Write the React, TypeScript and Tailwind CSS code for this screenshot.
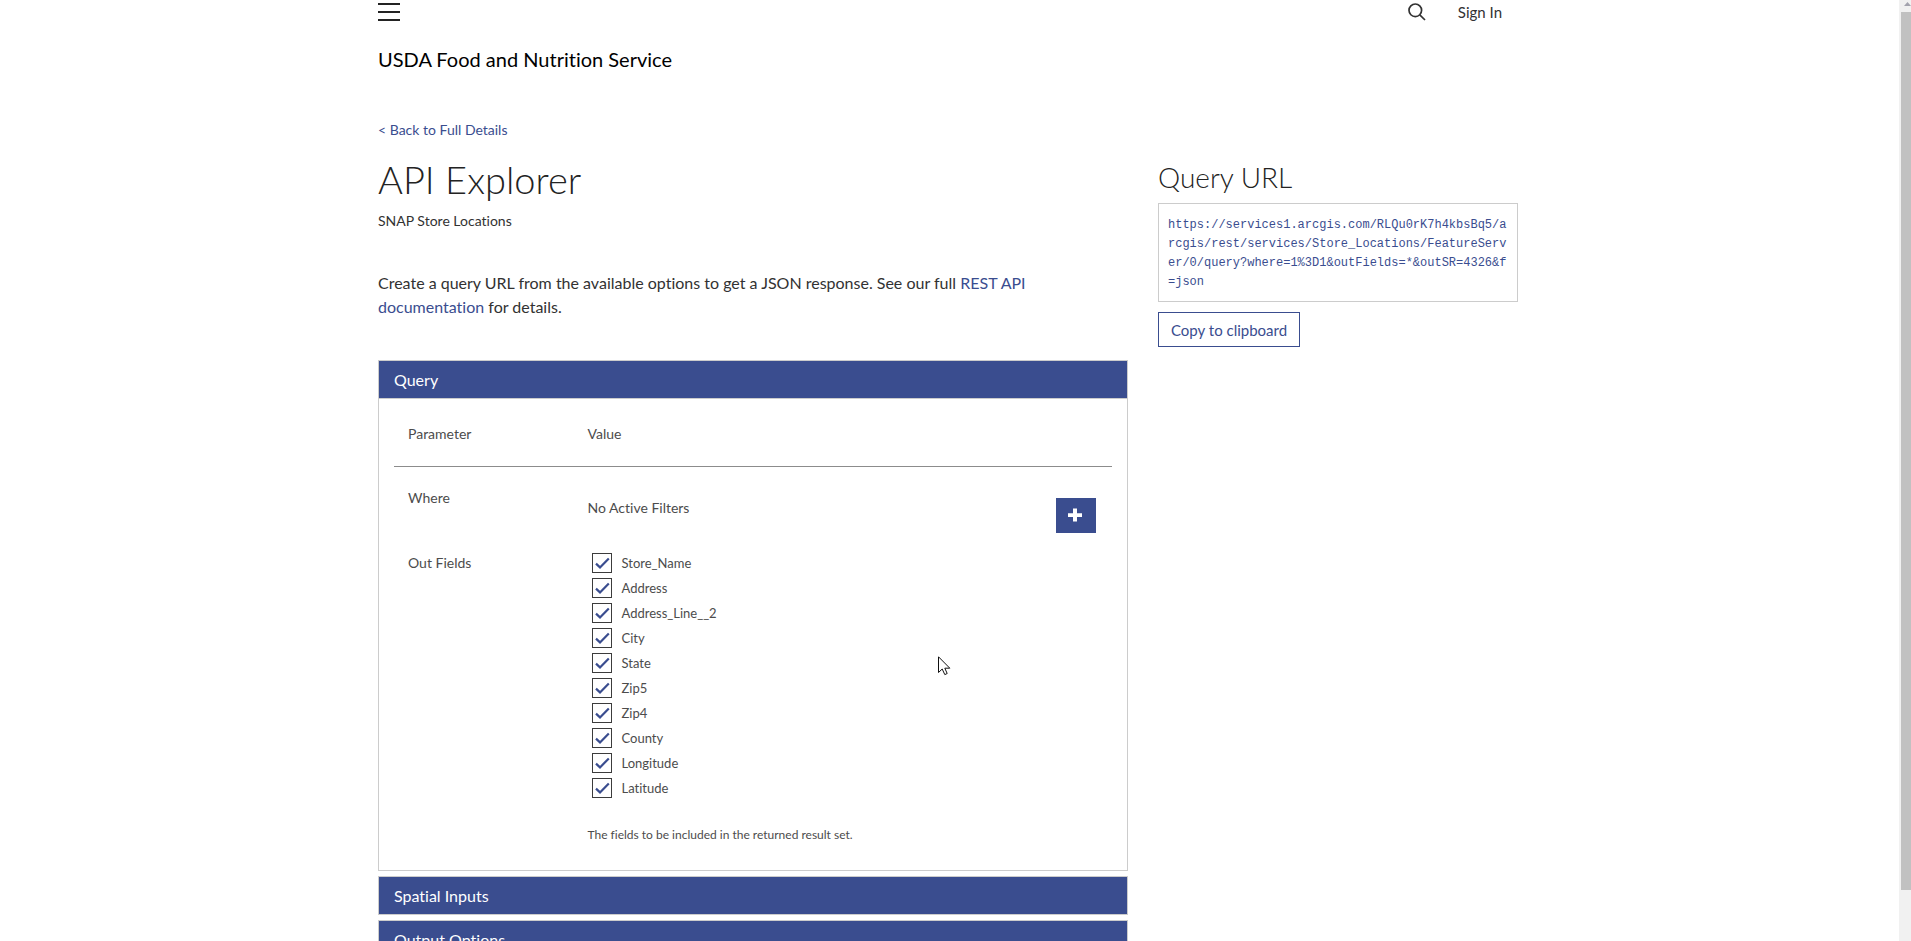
import React, { useState } from "react";

const FIELDS = [
  "Store_Name",
  "Address",
  "Address_Line__2",
  "City",
  "State",
  "Zip5",
  "Zip4",
  "County",
  "Longitude",
  "Latitude",
];

const QUERY_URL =
  "https://services1.arcgis.com/RLQu0rK7h4kbsBq5/arcgis/rest/services/Store_Locations/FeatureServer/0/query?where=1%3D1&outFields=*&outSR=4326&f=json";

function TopBar() {
  return (
    <header>
      <div className="flex h-6 items-center justify-between">
        <button type="button" aria-label="Menu" className="text-[#232323]">
          <svg width="22" height="20" viewBox="0 0 22 20" fill="currentColor">
            <rect y="1" width="22" height="2" />
            <rect y="9" width="22" height="2" />
            <rect y="17" width="22" height="2" />
          </svg>
        </button>
        <div className="flex items-center gap-8 pr-4">
          <button type="button" aria-label="Search" className="text-[#323232]">
            <svg width="18" height="18" viewBox="0 0 18 18" fill="none" stroke="currentColor" strokeWidth="1.7">
              <circle cx="7.3" cy="7.3" r="6.3" />
              <path d="M11.8 11.8 L17 17" />
            </svg>
          </button>
          <a href="#signin" className="text-[15px] leading-5 text-[#323232]">
            Sign In
          </a>
        </div>
      </div>
      <div className="mt-[21px] text-xl leading-7 text-black">USDA Food and Nutrition Service</div>
    </header>
  );
}

function FieldCheckbox({ name }: { name: string }) {
  const [checked, setChecked] = useState(true);
  const id = "field-" + name;
  return (
    <li className="flex h-5 items-center gap-[10px]">
      <span className="grid size-5">
        <input
          id={id}
          type="checkbox"
          checked={checked}
          onChange={(e) => setChecked(e.target.checked)}
          className="col-start-1 row-start-1 size-5 appearance-none border border-[#3c3c3c] bg-white"
        />
        {checked && (
          <svg
            className="pointer-events-none col-start-1 row-start-1"
            width="20"
            height="20"
            viewBox="0 0 20 20"
            fill="none"
            stroke="#3a4d8f"
            strokeWidth="2.2"
          >
            <path d="M4 10.6 L8 14.4 L16.8 5.4" />
          </svg>
        )}
      </span>
      <label htmlFor={id} className="text-[13px] leading-5">
        {name}
      </label>
    </li>
  );
}

function SectionHeader({ title, open }: { title: string; open?: boolean }) {
  return (
    <h2>
      <button
        type="button"
        aria-expanded={!!open}
        className="block w-full bg-[#3a4d8f] px-[15px] pt-[7px] pb-[6px] text-left text-base leading-6 text-white"
      >
        {title}
      </button>
    </h2>
  );
}

function QueryTable() {
  return (
    <div className="border-t border-[#ccc] px-[15px]">
      <table className="w-full table-fixed text-sm leading-5 text-[#4c4c4c]">
        <thead>
          <tr className="border-b border-[#8c8c8c] text-left">
            <th className="w-1/4 px-[14px] pt-[25px] pb-[22px] font-normal">Parameter</th>
            <th className="px-[14px] pt-[25px] pb-[22px] font-normal">Value</th>
          </tr>
        </thead>
        <tbody>
          <tr className="align-top">
            <th className="px-[14px] pt-[21px] text-left font-normal">Where</th>
            <td className="pt-[31px] pr-4 pl-[14px]">
              <div className="flex items-start justify-between">
                <span>No Active Filters</span>
                <button
                  type="button"
                  aria-label="Add filter"
                  className="flex h-[35px] w-10 items-center justify-center bg-[#3a4d8f] pr-[2px] pb-[2px]"
                >
                  <svg width="14" height="14" viewBox="0 0 14 14" fill="#fff">
                    <path d="M5 0.5h4v4.8h5v3.6h-5v4.6h-4v-4.6h-5v-3.6h5z" />
                  </svg>
                </button>
              </div>
            </td>
          </tr>
          <tr className="align-top">
            <th className="px-[14px] pt-5 text-left font-normal">Out Fields</th>
            <td className="px-[14px] pt-5 pb-[25px]">
              <ul className="flex flex-col gap-[5px] pl-1">
                {FIELDS.map((f) => (
                  <FieldCheckbox key={f} name={f} />
                ))}
              </ul>
              <p className="mt-[27px] text-xs leading-5">
                The fields to be included in the returned result set.
              </p>
            </td>
          </tr>
        </tbody>
      </table>
    </div>
  );
}

function Scrollbar() {
  return (
    <div aria-hidden="true" className="flex h-full w-3 shrink-0 flex-col bg-[#f1f1f1] pl-[2px]">
      <div className="flex h-3 shrink-0 justify-end pt-[2px]">
        <svg width="7" height="4" viewBox="0 0 7 4" fill="#a3a3ae">
          <path d="M0 4 L3.5 0 L7 4 Z" />
        </svg>
      </div>
      <div className="h-[93.3%] bg-[#c1c1c1]" />
    </div>
  );
}

export default function App() {
  return (
    <div className="flex h-screen overflow-hidden bg-white font-['Lato',sans-serif] text-[#323232] [font-variant-ligatures:none]">
      <div className="min-w-0 flex-1 overflow-y-auto pr-[3px] [scrollbar-width:none]">
        <div className="mx-auto max-w-[1140px]">
          <TopBar />
          <main className="pt-[47px] pb-10">
            <a href="#details" className="block w-fit text-sm leading-5 text-[#3a4d8f]">
              &lt; Back to Full Details
            </a>
            <div className="grid grid-cols-[minmax(0,25fr)_minmax(0,12fr)] gap-[30px]">
              <div className="pt-[17px]">
                <h1 className="text-[38px] leading-[44px] font-light text-[#232323]">API Explorer</h1>
                <p className="mt-[10px] text-sm leading-5">SNAP Store Locations</p>
                <p className="mt-10 text-base leading-6">
                  Create a query URL from the available options to get a JSON response. See our full{" "}
                  <a href="#rest" className="text-[#3a4d8f]">
                    REST API
                    <br />
                    documentation
                  </a>{" "}
                  for details.
                </p>
                <div className="mt-[41px] flex flex-col gap-[5px]">
                  <section className="border border-[#ccc]">
                    <SectionHeader title="Query" open />
                    <QueryTable />
                  </section>
                  <section className="border border-[#ccc]">
                    <SectionHeader title="Spatial Inputs" />
                  </section>
                  <section className="border border-[#ccc]">
                    <SectionHeader title="Output Options" />
                  </section>
                </div>
              </div>
              <aside className="pt-[21px]">
                <h2 className="text-[28px] leading-8 font-light text-[#232323]">Query URL</h2>
                <div className="mt-[10px] border border-[#ccc] px-[9px] pt-3 pb-[9px] font-['Liberation_Mono',monospace] text-xs leading-[19px] break-all text-[#3a4d8f]">
                  {QUERY_URL}
                </div>
                <button
                  type="button"
                  className="mt-[10px] h-[35px] border border-[#3a4d8f] bg-white px-3 text-[15px] leading-5 text-[#3a4d8f]"
                >
                  Copy to clipboard
                </button>
              </aside>
            </div>
          </main>
        </div>
      </div>
      <Scrollbar />
      <svg
        aria-hidden="true"
        className="pointer-events-none absolute top-[656px] left-[938px]"
        width="13"
        height="20"
        viewBox="0 0 13 20"
        fill="#fff"
        stroke="#111"
        strokeWidth="1"
      >
        <path d="M0.5 0.8 V16.5 L4.2 13 L6.8 18.6 L9.2 17.5 L6.8 12.2 H11.8 Z" />
      </svg>
    </div>
  );
}
